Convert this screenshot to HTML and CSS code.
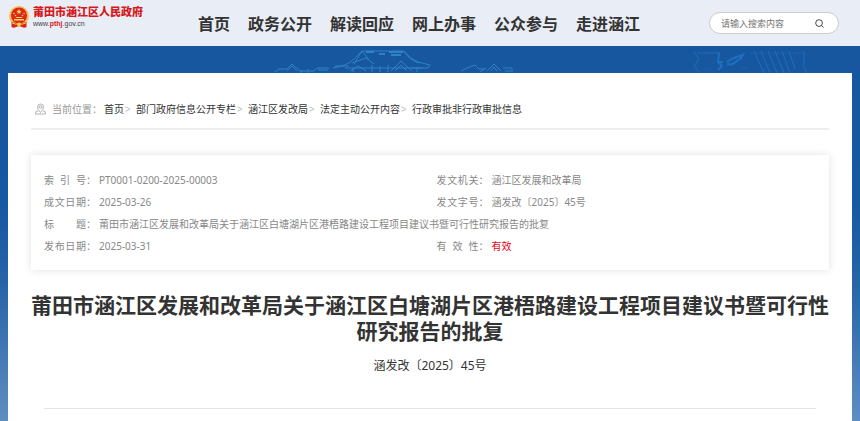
FILE: index.html
```html
<!DOCTYPE html>
<html lang="zh-CN">

<head>
    <meta charset="UTF-8">
    <meta name="viewport" content="width=device-width, initial-scale=1.0">
    <title>莆田市涵江区人民政府</title>
    <link rel="stylesheet" href="styles.css">
</head>

<body>
    <header class="header">
        <a class="logo" href="#">
            <svg class="emblem" viewBox="0 0 40 44" aria-hidden="true">
                <circle cx="20" cy="20" r="20" fill="#f2c14e" />
                <circle cx="20" cy="19" r="16" fill="#e0261c" />
                <path d="M20 6l1.600 3.400 3.700.400-2.800 2.500.800 3.700-3.300-1.900-3.300 1.900.800-3.700-2.800-2.500 3.700-.400z" fill="#fbd95b" />
                <g fill="#fbd95b">
                    <circle cx="10" cy="15" r="1.500" />
                    <circle cx="30" cy="15" r="1.500" />
                    <circle cx="13" cy="19" r="1.500" />
                    <circle cx="27" cy="19" r="1.500" />
                    <path d="M13 22h14l-2 2h-10zM10 26h20v3H10z" />
                </g>
                <path d="M5 32q15 5 30 0v10q-5 3-9 0-6-3-12 0-4 3-9 0z" fill="#d8231b" />
                <path d="M6 34q8 4 14 1 6 3 14-1" fill="none" stroke="#f7cf4d" stroke-width="2" />
                <circle cx="20" cy="37" r="4" fill="#f7cf4d" />
            </svg>
            <span class="logo-text">
                <strong>莆田市涵江区人民政府</strong>
                <small>www.<b>pthj</b>.gov.cn</small>
            </span>
        </a>
        <nav class="nav">
            <a href="#">首页</a>
            <a href="#">政务公开</a>
            <a href="#">解读回应</a>
            <a href="#">网上办事</a>
            <a href="#">公众参与</a>
            <a href="#">走进涵江</a>
        </nav>
        <form class="search">
            <input type="text" placeholder="请输入搜索内容" aria-label="请输入搜索内容">
            <button type="button" aria-label="搜索">
                <svg viewBox="0 0 20 20" fill="none" stroke="#333" stroke-width="2">
                    <circle cx="9" cy="9" r="7.500" />
                    <path d="M14 14l5 5" />
                </svg>
            </button>
        </form>
    </header>

    <main class="main">
        <svg class="skyline" viewBox="0 0 860 27" preserveAspectRatio="xMidYMin slice" fill="none" aria-hidden="true">
            <g stroke="#3c9add" opacity=".65">
                <!-- main hall -->
                <path d="M333 22q14-2 21-9l8-8h42q6 8 14 11l12 3-2 3h-17M335 20h14M362 5l-8 13M362 5l7 9M352 17l14-5 8 6M404 5q5 9 15 12" />
                <path d="M366 6h8M379 8h6M389 6h14M391 9h10" stroke-width="2" />
                <path d="M345 22h78M350 25l8-5 8 5M391 25l10-10 11 10M395 25l6-6 6 6M372 19v7M380 20v6M388 19v7M353 22v4M417 21v5" />
                <!-- side halls -->
                <path d="M275 26l4-3h8l5-5 8 7h14l3-3h12M287 25l5-5 5 5M301 24v3M308 23v4M318 24h10" />
                <path d="M461 25l6-3 8-3 4 4h6M480 26l6-4M487 25l7-7 7 7M491 25l3-4 3 4M503 22h9v4M505 25h6" />
            </g>
            <g stroke="#2482dc" opacity=".55">
                <path d="M694 6l5 7-5 7 5 6M697 7h23M754 5l10 22M761 5l9 22M768 5l9 22M775 5l9 22M782 5l8 22M789 5l6 18M804 5v16l3 6" />
                <path d="M719 7l-1 9 4 4-4 4M717 16h6M727 16q7-5 16-7M727 18q6 2 12-5M739 11l4-2-3 5" stroke-width="2" />
                <path d="M705 23h8M740 22h9M750 7h55" opacity=".5" />
            </g>
        </svg>

        <article class="card">
            <nav class="crumbs" aria-label="当前位置">
                <svg class="pin" viewBox="0 0 22 24" fill="none" stroke="#999" stroke-width="1.500">
                    <path d="M11 19q-6-6-6-11a6 6 0 0 1 12 0q0 5-6 11z" />
                    <circle cx="11" cy="8" r="2.500" />
                    <path d="M6 16l-4 1-1 5h20l-1-5-4-1" />
                </svg>
                <span class="here">当前位置：</span>
                <a href="#">首页</a>
                <a href="#">部门政府信息公开专栏</a>
                <a href="#">涵江区发改局</a>
                <a href="#">法定主动公开内容</a>
                <a href="#">行政审批非行政审批信息</a>
            </nav>

            <div class="info">
                <table>
                    <tr>
                        <th scope="row"><span>索 引 号</span>：</th>
                        <td>PT0001-0200-2025-00003</td>
                        <th scope="row"><span>发文机关</span>：</th>
                        <td>涵江区发展和改革局</td>
                    </tr>
                    <tr>
                        <th scope="row"><span>成文日期</span>：</th>
                        <td>2025-03-26</td>
                        <th scope="row"><span>发文字号</span>：</th>
                        <td>涵发改〔2025〕45号</td>
                    </tr>
                    <tr>
                        <th scope="row"><span>标 题</span>：</th>
                        <td colspan="3">莆田市涵江区发展和改革局关于涵江区白塘湖片区港梧路建设工程项目建议书暨可行性研究报告的批复</td>
                    </tr>
                    <tr>
                        <th scope="row"><span>发布日期</span>：</th>
                        <td>2025-03-31</td>
                        <th scope="row"><span>有 效 性</span>：</th>
                        <td class="valid">有效</td>
                    </tr>
                </table>
            </div>

            <h1>莆田市涵江区发展和改革局关于涵江区白塘湖片区港梧路建设工程项目建议书暨可行性研究报告的批复</h1>
            <p class="doc-no">涵发改〔2025〕45号</p>
            <hr>
        </article>
    </main>
</body>

</html>
```
FILE: styles.css
```css
* {
    padding: 0;
    margin: 0;
    box-sizing: border-box;
}

body {
    min-height: 100vh;
    display: flex;
    flex-direction: column;
    font-family: "Noto Sans", "Noto Sans CJK SC", sans-serif;
    font-size: 10px;
    color: #333;
}

a {
    color: inherit;
    text-decoration: none;
}

.header {
    display: flex;
    align-items: center;
    height: 46px;
    padding: 0 21px 0 9px;
    background: #e8edf6;
}

.logo {
    flex: 0 0 189px;
    display: flex;
    align-items: center;
    gap: 4px;
    padding-bottom: 13px;
}

.emblem {
    width: 20px;
    height: 22px;
}

.logo-text {
    display: flex;
    flex-direction: column;
    gap: 2px;
}

.logo-text strong {
    font-size: 11px;
    font-weight: 900;
    line-height: 12px;
    color: #d51a20;
}

.logo-text small {
    font-family: "Liberation Sans", Arial, sans-serif;
    font-size: 7px;
    line-height: 8px;
    color: #444;
}

.logo-text b {
    color: #d51a20;
}

.nav {
    display: flex;
    gap: 18px;
    font-size: 16px;
    font-weight: 700;
    white-space: nowrap;
}

.search {
    display: flex;
    align-items: center;
    width: 130px;
    height: 22px;
    margin-left: auto;
    padding: 0 14px 0 11px;
    border: 1px solid #ccc;
    border-radius: 11px;
    background: #fff;
}

.search input {
    flex: 1;
    min-width: 0;
    border: none;
    outline: none;
    background: none;
    font-family: inherit;
    font-size: 9px;
}

.search input::placeholder {
    color: #757575;
}

.search button {
    display: flex;
    border: none;
    background: none;
    cursor: pointer;
}

.search svg {
    width: 9px;
    height: 9px;
}

.main {
    position: relative;
    flex: 1;
    display: flex;
    padding: 27px 8px 0;
    background: linear-gradient(#17579f, #1658a2 160px, #2864a8 240px, #6090c0 380px);
}

.skyline {
    position: absolute;
    top: 0;
    left: 0;
    width: 100%;
    height: 27px;
}

.card {
    position: relative;
    flex: 1;
    padding: 25px 23px 12px;
    background: #fff;
}

.crumbs {
    display: flex;
    align-items: center;
    padding: 0 0 8px 4px;
    border-bottom: 2px solid #eee;
    line-height: 22px;
}

.pin {
    width: 11px;
    height: 12px;
    margin-right: 6px;
}

.here {
    width: 52px;
    color: #999;
}

.crumbs a + a::before {
    content: '>';
    display: inline-block;
    width: 11px;
    padding-left: 1px;
    color: #bbb;
}

.info {
    margin: 25px 0 22px;
    padding: 14px 0 13px 13px;
    box-shadow: 0 0 8px 0 rgba(0, 0, 0, .12);
    color: #888;
}

.info table {
    width: 100%;
    table-layout: fixed;
    border-collapse: collapse;
    line-height: 22px;
}

.info th {
    width: 55px;
    font-weight: 400;
    text-align: left;
    white-space: nowrap;
}

.info th span {
    display: inline-block;
    width: 42px;
    text-align-last: justify;
}

.info .valid {
    color: #e60012;
}

h1 {
    font-size: 21px;
    line-height: 26px;
    text-align: center;
}

.doc-no {
    margin-top: 11px;
    font-size: 12px;
    line-height: 22px;
    text-align: center;
}

hr {
    margin: 31px 13px 0;
    border: none;
    border-top: 1px solid #e5e5e5;
}
```
